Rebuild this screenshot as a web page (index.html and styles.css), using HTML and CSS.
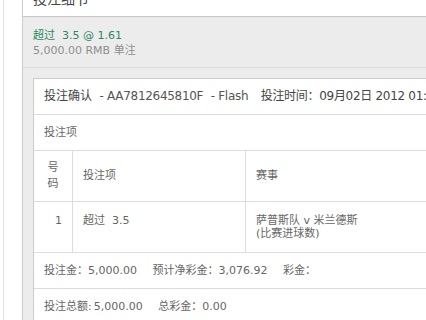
FILE: index.html
```html
<!DOCTYPE html>
<html lang="zh-CN">
<head>
  <meta charset="UTF-8" />
  <title>投注细节</title>
  <link rel="stylesheet" href="styles.css">
</head>
<body>
  <div class="shell">
    <div class="panel">
      <div class="panel-head"><h2>投注细节</h2></div>
      <div class="summary">
        <div class="pick">超过&nbsp; 3.5 @ 1.61</div>
        <div class="stake">5,000.00 RMB 单注</div>
      </div>
      <div class="slip">
        <div class="box">
          <div class="box-title">
            <span class="cn">投注确认</span>
            <span class="ref">- AA7812645810F</span>
            <span class="ref">- Flash</span>
            <span class="time">投注时间：09月02日 2012 01:15</span>
          </div>
          <div class="box-label">投注项</div>
          <div class="bets">
            <div class="th num">号码</div>
            <div class="th">投注项</div>
            <div class="th">赛事</div>
            <div class="td num">1</div>
            <div class="td">超过&nbsp; 3.5</div>
            <div class="td">萨普斯队 v 米兰德斯<br>(比赛进球数)</div>
          </div>
          <div class="totals">
            <span>投注金：5,000.00</span>
            <span>预计净彩金：3,076.92</span>
            <span>彩金：</span>
          </div>
          <div class="totals">
            <span>投注总额:<b>5,000.00</b></span>
            <span>总彩金：0.00</span>
          </div>
        </div>
      </div>
    </div>
  </div>
</body>
</html>
```

FILE: styles.css
```css
html, body {
  margin: 0;
  height: 100%;
  overflow: hidden;
  background: #fff;
}
body {
  font-family: "DejaVu Sans", "Noto Sans CJK SC", sans-serif;
  font-size: 11px;
  color: #666;
}
.shell {
  margin-left: 3px;
  height: 100%;
  border-left: 1px solid #e2e2e2;
  padding-left: 18px;
}
.panel {
  height: 100%;
  border-left: 1px solid #ccc;
  background: #ececec;
  width: 700px;
}
.panel-head {
  height: 17px;
  box-sizing: border-box;
  overflow: hidden;
  background: #fff;
  border-bottom: 1px solid #c8c8c8;
  padding-left: 10px;
}
.panel-head h2 {
  margin: -8px 0 0;
  font-size: 14px;
  line-height: 14px;
  font-weight: normal;
  color: #444;
}
.summary {
  height: 51px;
  box-sizing: border-box;
  padding: 11px 10px 0;
  border-bottom: 1px solid #dcdcdc;
  line-height: 15px;
}
.pick {
  color: #2a8a5e;
}
.stake {
  color: #8f8f8f;
}
.slip {
  padding: 10px 0 0 10px;
}
.box {
  background: #fff;
  border: 1px solid #ccc;
}
.box-title {
  height: 36px;
  box-sizing: border-box;
  border-bottom: 1px solid #ddd;
  padding-left: 10px;
  line-height: 35px;
  font-size: 12px;
  letter-spacing: -0.3px;
  color: #555;
  white-space: nowrap;
}
.box-title .cn {
  color: #444;
  letter-spacing: 0;
  margin-right: 4px;
}
.box-title .ref {
  margin-right: 4px;
}
.box-title .time {
  margin-left: 5px;
  color: #444;
}
.box-label {
  height: 36px;
  box-sizing: border-box;
  border-bottom: 1px solid #ddd;
  padding-left: 10px;
  line-height: 35px;
}
.bets {
  display: grid;
  grid-template-columns: 39px 173px 1fr;
}
.th, .td {
  box-sizing: border-box;
  height: 51px;
  border-right: 1px solid #ddd;
  border-bottom: 1px solid #ddd;
  padding: 0 10px;
}
.th {
  display: flex;
  align-items: center;
  line-height: 16px;
}
.th.num {
  justify-content: center;
  text-align: center;
}
.td {
  padding-top: 12px;
  line-height: 13px;
}
.td.num {
  text-align: right;
}
.totals {
  height: 36px;
  box-sizing: border-box;
  border-bottom: 1px solid #ddd;
  padding-left: 10px;
  line-height: 35px;
  white-space: nowrap;
}
.totals span {
  margin-right: 12px;
}
.totals b {
  font-weight: normal;
  margin-left: 2px;
}
```
